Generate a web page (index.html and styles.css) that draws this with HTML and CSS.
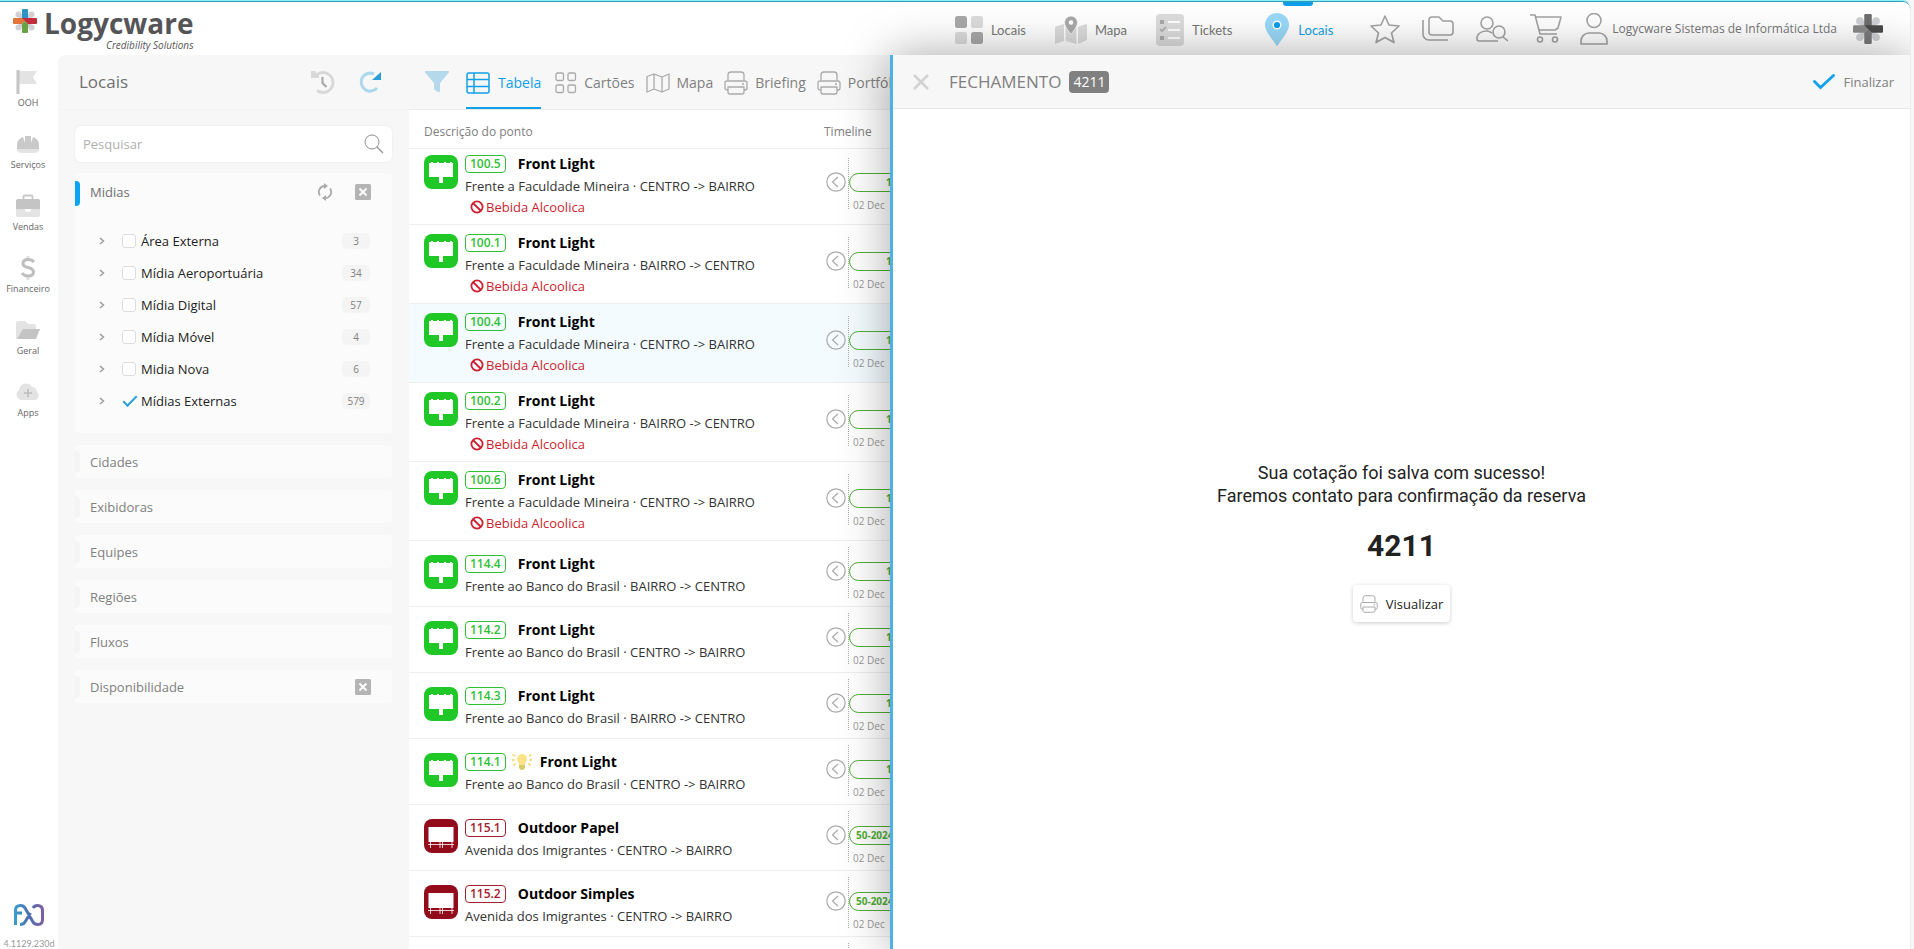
FILE: index.html
```html
<!DOCTYPE html>
<html lang="pt-BR">
<head>
<meta charset="utf-8">
<title>Logycware - Locais</title>
<link rel="stylesheet" href="styles.css">
</head>
<body>
<svg class="sprite" aria-hidden="true">
  <symbol id="asterisk" viewBox="0 0 24 24">
    <g class="ast-petal"><circle cx="5.500" cy="5.500" r="3"/><circle cx="18.500" cy="5.500" r="3"/><circle cx="5.500" cy="18.500" r="3"/><circle cx="18.500" cy="18.500" r="3"/><path d="M4 7 7 4l13 13-3 3zM17 4l3 3L7 20l-3-3z"/></g>
    <path class="ast-n" d="M10 0h4a1 1 0 0 1 1 1v8l-3 3-3-3V1a1 1 0 0 1 1-1z"/>
    <path class="ast-w" d="M1 9h8l3 3-3 3H1a1 1 0 0 1-1-1v-4a1 1 0 0 1 1-1z"/>
    <path class="ast-s" d="M9 15l3-3 3 3v8a1 1 0 0 1-1 1h-4a1 1 0 0 1-1-1z"/>
    <path class="ast-e" d="M9 9h14a1 1 0 0 1 1 1v4a1 1 0 0 1-1 1h-8z"/>
  </symbol>
  <symbol id="printer" viewBox="0 0 24 24"><g fill="none" stroke="currentColor" stroke-width="1.300" stroke-linejoin="round"><path d="M4 9V4a3 3 0 0 1 3-3h10a3 3 0 0 1 3 3v5"/><path d="M4 19H3a2 2 0 0 1-2-2v-5a2 2 0 0 1 2-2h18a2 2 0 0 1 2 2v5a2 2 0 0 1-2 2h-1M18 13h2"/><path d="M4 16h16v5a2 2 0 0 1-2 2H6a2 2 0 0 1-2-2z"/></g></symbol>
  <symbol id="billboard" viewBox="0 0 34 34"><rect width="34" height="34" rx="8" fill="#20c827"/><path fill="#fff" d="M5 8h2v-1h2v1h4v-1h2v1h5v-1h2v1h4v-1h2v1h1v14H19v6h-4v-6H5z"/></symbol>
  <symbol id="outdoor" viewBox="0 0 34 34"><rect width="34" height="34" rx="8" fill="#930c1c"/><path fill="#fff" d="M4.500 8h25v15h-25z"/><path fill="none" stroke="#fff" d="M4 25.500h26M6.500 23v6M16 23v6M18.500 23v6M28 23v6" stroke-width=".8"/></symbol>
  <symbol id="forbid" viewBox="0 0 14 14"><g fill="none" stroke="currentColor" stroke-width="1.800"><circle cx="7" cy="7" r="5.600"/><path d="m3 3 8 8"/></g></symbol>
  <symbol id="prev" viewBox="0 0 20 20"><g fill="none" stroke="currentColor" stroke-width="1.200"><circle cx="10" cy="10" r="9.200"/><path d="m12 5-5.500 5 5.500 5"/></g></symbol>
  <symbol id="chev" viewBox="0 0 6 8"><path d="m1 1 3.500 3L1 7" fill="none" stroke="currentColor" stroke-width="1.400"/></symbol>
  <symbol id="xbox" viewBox="0 0 16 16"><rect width="16" height="16" rx="1.500" fill="#b4b4b4"/><path d="m4.500 4.500 7 7m0-7-7 7" stroke="#fff" stroke-width="1.800"/></symbol>
</svg>

<div class="app">
  <header class="topbar">
    <a class="brand" href="#">
      <svg class="brand-mark"><use href="#asterisk"/></svg>
      <span class="brand-text"><strong>Logycware</strong><em>Credibility Solutions</em></span>
    </a>
    <nav class="topnav">
      <a href="#"><svg width="28" height="28" viewBox="0 0 28 28"><rect width="12" height="12" rx="2.500" fill="#a9a9a9"/><rect x="16" width="12" height="12" rx="2.500" fill="#dcdcdc"/><rect y="16" width="12" height="12" rx="2.500" fill="#dcdcdc"/><rect x="16" y="16" width="12" height="12" rx="2.500" fill="#a9a9a9"/></svg>Locais</a>
      <a href="#"><svg width="32" height="28" viewBox="0 0 32 28"><path fill="#dcdcdc" d="M0 12q0-1 1-1.500l8-2.500v17l-9 3zM10.500 8l11 3v17l-11-3zM23 11l8-3q1 0 1 1v14q0 1-1 1.500L23 28z"/><path d="M16 0a6.500 6.500 0 0 1 6.500 6.500C22.500 11 16 18 16 18S9.500 11 9.500 6.500A6.500 6.500 0 0 1 16 0z" fill="#a9a9a9" stroke="#fff" stroke-width=".7"/><circle cx="16" cy="6.500" r="2.300" fill="#fff"/></svg>Mapa</a>
      <a href="#"><svg width="28" height="32" viewBox="0 0 28 32"><rect width="28" height="32" rx="4" fill="#dcdcdc"/><path d="M12 8h12M12 16h12M12 24h12" stroke="#fff" stroke-width="2"/><path fill="#a9a9a9" d="M4 6h4v4H4zM4 22h4v4H4z"/><path d="m4 15 2 2 4-4" fill="none" stroke="#a9a9a9" stroke-width="1.600"/></svg>Tickets</a>
      <a class="active" href="#"><svg width="24" height="33" viewBox="0 0 24 33"><path fill="#99d9f8" d="M12 0a12 12 0 0 1 12 12c0 7-9 16-11 20q-1 2-2 0C9 28 0 19 0 12A12 12 0 0 1 12 0z"/><circle cx="12" cy="12" r="3.800" fill="#0aa0ea" stroke="#fff" stroke-width="1.400"/></svg>Locais</a>
    </nav>
    <div class="tools">
      <button aria-label="Favoritos"><svg width="30" height="30" viewBox="0 0 30 30"><path d="m15 2 4 9 10 1-7.500 7 2.500 9.500-9-5-9 5L8.500 19 1 12l10-1z"/></svg></button>
      <button aria-label="Pastas"><svg width="32" height="28" viewBox="0 0 32 28"><path d="M7 5a3 3 0 0 1 3-3h7l4 4h7a3 3 0 0 1 3 3v8a3 3 0 0 1-3 3H10a3 3 0 0 1-3-3zM1 5v14a6 6 0 0 0 6 6h19"/></svg></button>
      <button aria-label="Clientes"><svg width="32" height="28" viewBox="0 0 32 28"><circle cx="11" cy="8" r="6"/><path d="M16 18q-3-2-5-2-8 0-10 6v2q0 2 2 2h19M27 22l5 4"/><circle cx="23" cy="17" r="6"/></svg></button>
      <button aria-label="Carrinho"><svg width="32" height="30" viewBox="0 0 32 30"><path d="M0 1h5l5 19h17M5 3h26l-3 11-3 2H9"/><circle cx="10" cy="25.500" r="2.500"/><circle cx="25" cy="25.500" r="2.500"/></svg></button>
      <button class="user"><svg width="28" height="32" viewBox="0 0 28 32"><circle cx="14" cy="7.500" r="7"/><path d="M1 31v-3a8 8 0 0 1 8-8h10a8 8 0 0 1 8 8v3z"/></svg>Logycware Sistemas de Informática Ltda</button>
      <svg class="tenant"><use href="#asterisk"/></svg>
    </div>
  </header>

  <div class="body">
    <nav class="rail">
      <a href="#"><svg width="24" height="24" viewBox="0 0 24 24"><path fill="#e3e3e3" d="M3 1h18l-4 6 4 7H3z"/><path d="M2 0v24" stroke="#c4c4c4" stroke-width="3"/></svg>OOH</a>
      <a href="#"><svg width="24" height="24" viewBox="0 0 24 24"><path fill="#c9c9c9" d="M1 17v-3a9 9 0 0 1 6-9l2 6V4h6v7l2-6a9 9 0 0 1 6 9v3z"/><path fill="#e3e3e3" d="M1 17h22q0 4-5 4H6q-5 0-5-4z"/></svg>Serviços</a>
      <a href="#"><svg width="24" height="24" viewBox="0 0 24 24"><path d="M7.500 6V3q0-1.500 1.500-1.500h6q1.500 0 1.500 1.500v3" fill="none" stroke="#c9c9c9" stroke-width="2"/><rect y="5" width="24" height="18" rx="2.500" fill="#e3e3e3"/><path fill="#c4c4c4" d="M2 5h20q2 0 2 2v8H0V7q0-2 2-2z"/><path fill="#fff" d="M9 15h6v2q-3 2-6 0z"/></svg>Vendas</a>
      <a href="#"><svg width="24" height="24" viewBox="0 0 24 24"><path d="M12 0v4M12 20v4" stroke="#e0e0e0" stroke-width="3"/><path d="M18 6q-2-2.500-6-2.500-5 0-5 4 0 3 5 4t5.500 4.500q0 4-5.500 4-4 0-6-3" fill="none" stroke="#bfbfbf" stroke-width="3"/></svg>Financeiro</a>
      <a href="#"><svg width="24" height="24" viewBox="0 0 24 24"><path fill="#e3e3e3" d="M0 21V5q0-2 2-2h7l3 3h6q2 0 2 2v6z"/><path fill="#c4c4c4" d="M7 11h17l-4 10H1z"/></svg>Geral</a>
      <a href="#"><svg width="24" height="24" viewBox="0 0 24 24"><path fill="#e3e3e3" d="M6 20a5.500 5.500 0 0 1-3-10 7 7 0 0 1 13-3q4 0 5 5a4.500 4.500 0 0 1-2 8z"/><path d="M12 9v8M8 13h8" stroke="#bdbdbd" stroke-width="1.600"/></svg>Apps</a>
      <div class="rail-foot">
        <svg width="30" height="22" viewBox="0 0 30 22"><defs><linearGradient id="fx"><stop offset="0" stop-color="#3b9ccb"/><stop offset=".5" stop-color="#4d6fb0"/><stop offset="1" stop-color="#7b5fa3"/></linearGradient></defs><path d="M1.500 21V6q0-4.500 5-4.500 3 0 4.500 2.500l8 14q1.500 2.500 5 2.500 4.500 0 4.500-5V6.500q0-5-5-5-3 0-4.500 2.500M3 9h5M16.500 9l-5.500 9q-1.500 2.500-5 2.500" fill="none" stroke="url(#fx)" stroke-width="3"/></svg>
        <small>4.1129.230d</small>
      </div>
    </nav>

    <aside class="filters">
      <div class="filters-head">
        <h1>Locais</h1>
        <button aria-label="Histórico"><svg width="24" height="24" viewBox="0 0 24 24"><path d="M5.500 5A10 10 0 1 1 6 20.500" fill="none" stroke="#d8d8d8" stroke-width="3"/><path fill="#d8d8d8" d="M0 1h4l1 2 3 1v4H0z"/><path d="M11.500 7v6l4 4" fill="none" stroke="#a8a8a8" stroke-width="2.200"/></svg></button>
        <button aria-label="Atualizar"><svg width="24" height="24" viewBox="0 0 24 24"><path d="M15 4a9 9 0 1 0 3 14" fill="none" stroke="#a9d8ef" stroke-width="3"/><path fill="#249fd8" d="M22 2v8h-9z"/></svg></button>
      </div>
      <div class="search">
        <input type="text" aria-label="Pesquisar" placeholder="Pesquisar">
        <svg width="20" height="20" viewBox="0 0 20 20"><circle cx="8" cy="8" r="7" fill="none" stroke="#8f8f8f"/><path d="m13 13 6 6" stroke="#8f8f8f" stroke-width="1.200"/></svg>
      </div>
      <section class="card open">
        <div class="card-head">
          <h2>Midias</h2>
          <button aria-label="Recarregar"><svg width="16" height="18" viewBox="0 0 16 18"><path d="M8 3a6 6 0 0 0-5 9.500M8 15a6 6 0 0 0 5-9.500" fill="none" stroke="#aaa" stroke-width="1.800"/><path fill="#aaa" d="M7 0l4 3-4 3zM9 12v6l-4-3z"/></svg></button>
          <button aria-label="Limpar"><svg width="16" height="16"><use href="#xbox"/></svg></button>
        </div>
        <ul class="tree">
          <li><svg><use href="#chev"/></svg><label><input type="checkbox">Área Externa</label><span>3</span></li>
          <li><svg><use href="#chev"/></svg><label><input type="checkbox">Mídia Aeroportuária</label><span>34</span></li>
          <li><svg><use href="#chev"/></svg><label><input type="checkbox">Mídia Digital</label><span>57</span></li>
          <li><svg><use href="#chev"/></svg><label><input type="checkbox">Mídia Móvel</label><span>4</span></li>
          <li><svg><use href="#chev"/></svg><label><input type="checkbox">Midia Nova</label><span>6</span></li>
          <li><svg><use href="#chev"/></svg><label><input type="checkbox" checked>Mídias Externas</label><span>579</span></li>
        </ul>
      </section>
      <section class="card"><h2>Cidades</h2></section>
      <section class="card"><h2>Exibidoras</h2></section>
      <section class="card"><h2>Equipes</h2></section>
      <section class="card"><h2>Regiões</h2></section>
      <section class="card"><h2>Fluxos</h2></section>
      <section class="card"><h2>Disponibilidade</h2><button aria-label="Limpar disponibilidade"><svg width="16" height="16"><use href="#xbox"/></svg></button></section>
    </aside>

    <main class="content">
      <div class="tabs">
        <button class="funnel" aria-label="Filtrar"><svg width="24" height="22" viewBox="0 0 24 22"><path fill="#b3d9ea" d="M1 0h22q2 0 .5 2L15 12v8q0 2-2 1l-3-2q-1-.5-1-2v-5L.500 2Q-1 0 1 0z"/></svg></button>
        <button class="tab active"><svg width="24" height="22" viewBox="0 0 24 22"><path d="M3 1h18a2 2 0 0 1 2 2v16a2 2 0 0 1-2 2H3a2 2 0 0 1-2-2V3a2 2 0 0 1 2-2zM1 7.500h22M1 14.500h22M8 1v20" fill="none" stroke="currentColor" stroke-width="1.500"/></svg>Tabela</button>
        <button class="tab"><svg width="22" height="22" viewBox="0 0 22 22"><g fill="none" stroke="currentColor" stroke-width="1.300"><rect x="1" y="1" width="7.500" height="7.500" rx="1.500"/><rect x="13" y="1" width="7.500" height="7.500" rx="1.500"/><rect x="1" y="13" width="7.500" height="7.500" rx="1.500"/><rect x="13" y="13" width="7.500" height="7.500" rx="1.500"/></g></svg>Cartões</button>
        <button class="tab"><svg width="24" height="20" viewBox="0 0 24 20"><path d="M1 3.500 8 1l8 3 7-3v15l-7 3-8-3-7 3zM8 1v15M16 4v15" fill="none" stroke="currentColor" stroke-width="1.300" stroke-linejoin="round"/></svg>Mapa</button>
        <button class="tab"><svg width="24" height="24"><use href="#printer"/></svg>Briefing</button>
        <button class="tab"><svg width="24" height="24"><use href="#printer"/></svg>Portfólio</button>
      </div>
      <table class="points">
        <thead><tr><th class="col-desc">Descrição do ponto</th><th>Timeline</th></tr></thead>
        <tbody>
          <tr class="first"><td><div class="point"><svg><use href="#billboard"/></svg><div><p class="name"><span class="code">100.5</span><b>Front Light</b></p><p>Frente a Faculdade Mineira · CENTRO -&gt; BAIRRO</p><p class="ban"><svg><use href="#forbid"/></svg>Bebida Alcoolica</p></div></div></td><td><div class="time"><button aria-label="Anterior"><svg><use href="#prev"/></svg></button><div class="track"><span class="pill wide">12-2024</span><small>02 Dec</small></div></div></td></tr>
          <tr class="tall"><td><div class="point"><svg><use href="#billboard"/></svg><div><p class="name"><span class="code">100.1</span><b>Front Light</b></p><p>Frente a Faculdade Mineira · BAIRRO -&gt; CENTRO</p><p class="ban"><svg><use href="#forbid"/></svg>Bebida Alcoolica</p></div></div></td><td><div class="time"><button aria-label="Anterior"><svg><use href="#prev"/></svg></button><div class="track"><span class="pill wide">12-2024</span><small>02 Dec</small></div></div></td></tr>
          <tr class="tall hover"><td><div class="point"><svg><use href="#billboard"/></svg><div><p class="name"><span class="code">100.4</span><b>Front Light</b></p><p>Frente a Faculdade Mineira · CENTRO -&gt; BAIRRO</p><p class="ban"><svg><use href="#forbid"/></svg>Bebida Alcoolica</p></div></div></td><td><div class="time"><button aria-label="Anterior"><svg><use href="#prev"/></svg></button><div class="track"><span class="pill wide">12-2024</span><small>02 Dec</small></div></div></td></tr>
          <tr class="tall"><td><div class="point"><svg><use href="#billboard"/></svg><div><p class="name"><span class="code">100.2</span><b>Front Light</b></p><p>Frente a Faculdade Mineira · BAIRRO -&gt; CENTRO</p><p class="ban"><svg><use href="#forbid"/></svg>Bebida Alcoolica</p></div></div></td><td><div class="time"><button aria-label="Anterior"><svg><use href="#prev"/></svg></button><div class="track"><span class="pill wide">12-2024</span><small>02 Dec</small></div></div></td></tr>
          <tr class="tall"><td><div class="point"><svg><use href="#billboard"/></svg><div><p class="name"><span class="code">100.6</span><b>Front Light</b></p><p>Frente a Faculdade Mineira · CENTRO -&gt; BAIRRO</p><p class="ban"><svg><use href="#forbid"/></svg>Bebida Alcoolica</p></div></div></td><td><div class="time"><button aria-label="Anterior"><svg><use href="#prev"/></svg></button><div class="track"><span class="pill wide">12-2024</span><small>02 Dec</small></div></div></td></tr>
          <tr><td><div class="point"><svg><use href="#billboard"/></svg><div><p class="name"><span class="code">114.4</span><b>Front Light</b></p><p>Frente ao Banco do Brasil · BAIRRO -&gt; CENTRO</p></div></div></td><td><div class="time"><button aria-label="Anterior"><svg><use href="#prev"/></svg></button><div class="track"><span class="pill wide">12-2024</span><small>02 Dec</small></div></div></td></tr>
          <tr><td><div class="point"><svg><use href="#billboard"/></svg><div><p class="name"><span class="code">114.2</span><b>Front Light</b></p><p>Frente ao Banco do Brasil · CENTRO -&gt; BAIRRO</p></div></div></td><td><div class="time"><button aria-label="Anterior"><svg><use href="#prev"/></svg></button><div class="track"><span class="pill wide">12-2024</span><small>02 Dec</small></div></div></td></tr>
          <tr><td><div class="point"><svg><use href="#billboard"/></svg><div><p class="name"><span class="code">114.3</span><b>Front Light</b></p><p>Frente ao Banco do Brasil · BAIRRO -&gt; CENTRO</p></div></div></td><td><div class="time"><button aria-label="Anterior"><svg><use href="#prev"/></svg></button><div class="track"><span class="pill wide">12-2024</span><small>02 Dec</small></div></div></td></tr>
          <tr><td><div class="point"><svg><use href="#billboard"/></svg><div><p class="name"><span class="code">114.1</span><svg class="bulb" viewBox="0 0 20 18"><path fill="#fbe38a" d="M10 1a5 5 0 0 1 5 5c0 3-2 3.500-2 6H7C7 9.500 5 9 5 6a5 5 0 0 1 5-5z"/><path fill="#d8cc6a" d="M7 12h6v3l-2 2H9l-2-2z"/><path d="M3 3 .5 1.500M2.500 7H0M3.500 10.500l-2 2M17 3l2.500-1.500M17.500 7H20M16.500 10.500l2 2" stroke="#efd04a" stroke-width="1.400"/></svg><b>Front Light</b></p><p>Frente ao Banco do Brasil · CENTRO -&gt; BAIRRO</p></div></div></td><td><div class="time"><button aria-label="Anterior"><svg><use href="#prev"/></svg></button><div class="track"><span class="pill wide">12-2024</span><small>02 Dec</small></div></div></td></tr>
          <tr><td><div class="point red"><svg><use href="#outdoor"/></svg><div><p class="name"><span class="code">115.1</span><b>Outdoor Papel</b></p><p>Avenida dos Imigrantes · CENTRO -&gt; BAIRRO</p></div></div></td><td><div class="time"><button aria-label="Anterior"><svg><use href="#prev"/></svg></button><div class="track"><span class="pill">50-2024</span><small>02 Dec</small></div></div></td></tr>
          <tr><td><div class="point red"><svg><use href="#outdoor"/></svg><div><p class="name"><span class="code">115.2</span><b>Outdoor Simples</b></p><p>Avenida dos Imigrantes · CENTRO -&gt; BAIRRO</p></div></div></td><td><div class="time"><button aria-label="Anterior"><svg><use href="#prev"/></svg></button><div class="track"><span class="pill">50-2024</span><small>02 Dec</small></div></div></td></tr>
          <tr><td></td><td><div class="time"><div class="track lone"></div></div></td></tr>
        </tbody>
      </table>
    </main>

    <section class="drawer" role="dialog" aria-label="Fechamento">
      <div class="drawer-head">
        <button class="close" aria-label="Fechar"><svg width="16" height="16" viewBox="0 0 16 16"><path d="m1 1 14 14M15 1 1 15" stroke="#d2d2d2" stroke-width="2.600"/></svg></button>
        <h2>FECHAMENTO</h2><span class="quote">4211</span>
        <button class="finish"><svg width="22" height="16" viewBox="0 0 22 16"><path d="m1.500 7.500 6 6L20.500 1.500" fill="none" stroke="#10a0ee" stroke-width="2.800" stroke-linecap="round"/></svg>Finalizar</button>
      </div>
      <div class="drawer-body">
        <p>Sua cotação foi salva com sucesso!<br>Faremos contato para confirmação da reserva</p>
        <strong>4211</strong>
        <button class="view"><svg width="18" height="18"><use href="#printer"/></svg>Visualizar</button>
      </div>
    </section>
  </div>
</div>
</body>
</html>
```
FILE: styles.css
```css
* { box-sizing: border-box; }
body, h1, h2, p, ul { margin: 0; padding: 0; }
body {
  background: #f7f7f7;
  color: #222;
  font: 13px/20px "Open Sans", "Noto Sans", sans-serif;
}
button { border: 0; background: none; padding: 0; color: inherit; font: inherit; }
a { color: inherit; text-decoration: none; }
svg { display: block; flex: none; }
.sprite { position: absolute; width: 0; height: 0; }

.app {
  display: flex;
  flex-direction: column;
  height: 100vh;
  margin-right: 3px;
  padding-top: 1px;
  overflow: hidden;
  background: #fff;
  border-top: 1px solid #8eeef2;
  border-right: 1px solid #ececec;
  border-top-right-radius: 8px;
  box-shadow: inset 0 1px #2f9fc0;
}

/* top bar */
.topbar { display: flex; flex: none; height: 53px; padding-right: 27px; }
.brand { display: flex; align-items: flex-start; gap: 7px; padding: 5px 0 0 13px; }
.brand-mark { width: 24px; height: 24px; margin-top: 2px; }
.brand-text { display: flex; flex-direction: column; align-items: flex-end; color: #555558; }
.brand-text strong { font-size: 28px; line-height: 32px; }
.brand-text em { font-size: 10px; line-height: 12px; }
.ast-n { fill: var(--n, #6f6f6f); }
.ast-w { fill: var(--w, #8a8a8a); }
.ast-s { fill: var(--s, #7a7a7a); }
.ast-e { fill: var(--e, #4a4a4a); }
.ast-petal { fill: #cfd0d3; }
.brand-mark { --n: #2f93c8; --w: #e2763a; --s: #67a244; --e: #c42b3c; }
.topnav { display: flex; gap: 29px; margin-left: auto; font: 13px/18px Lato, sans-serif; color: #777; }
.topnav a { position: relative; display: flex; align-items: center; gap: 8px; padding-top: 2px; }
.topnav .active { gap: 9px; margin-left: 4px; color: #10a0ea; }
.topnav .active::before {
  content: "";
  position: absolute;
  top: 0;
  left: 18px;
  width: 30px;
  height: 4px;
  border-radius: 0 0 3px 3px;
  background: #10a0ea;
}
.tools { display: flex; align-items: center; gap: 22px; margin-left: 37px; color: #777; font-size: 12px; }
.tools button svg { fill: none; stroke: #a3a3a3; stroke-width: 1.600; stroke-linejoin: round; }
.tools .user { display: flex; align-items: center; gap: 4px; margin-left: -4px; }
.tenant { width: 30px; height: 30px; margin-left: -6px; }

.body { position: relative; display: flex; flex: 1; min-height: 0; }

/* icon rail */
.rail { display: flex; flex: none; flex-direction: column; width: 58px; padding-top: 15px; }
.rail a { display: flex; flex-direction: column; align-items: center; gap: 3px; height: 62px; padding-right: 2px; color: #666; font-size: 9px; line-height: 11px; }
.rail-foot { display: flex; flex-direction: column; align-items: center; gap: 13px; margin-top: auto; color: #999; }
.rail-foot small { font: 9px/10px Lato, sans-serif; }

/* filters */
.filters { flex: none; width: 351px; padding: 0 17px; background: #f7f7f7; border-top-left-radius: 8px; }
.filters-head { display: flex; align-items: center; gap: 24px; height: 55px; margin: 0 -17px 16px; padding: 0 26px 0 21px; border-bottom: 1px solid #f3f3f3; }
.filters-head h1 { flex: 1; color: #707070; font-size: 17px; font-weight: 400; }
.search { display: flex; align-items: center; height: 36px; padding: 0 8px 0 6px; border-radius: 6px; background: #fff; box-shadow: 0 0 2px #e4e4e4; }
.search input { flex: 1; min-width: 0; border: 0; outline: 0; background: none; font: inherit; }
.search input::placeholder { color: #b0b0b0; opacity: 1; }
.card { position: relative; display: flex; align-items: center; height: 33px; margin-top: 12px; padding: 0 21px 0 15px; border-radius: 4px; background: #fbfbfb; }
.card::before { content: ""; position: absolute; left: 0; top: 6px; width: 5px; height: 22px; border-radius: 0 4px 4px 0; background: #f4f4f4; }
.card h2 { flex: 1; color: #808080; font-size: 13px; font-weight: 400; }
.card.open { display: block; height: 260px; margin-top: 11px; }
.card.open::before { top: 8px; height: 25px; background: #0aa5f0; }
.card-head { display: flex; align-items: center; gap: 22px; height: 38px; }
.card-head h2 { color: #707070; }
.tree { margin-top: 14px; list-style: none; }
.tree li { display: flex; align-items: center; height: 32px; }
.tree li > svg { width: 6px; height: 8px; margin: 0 17px 0 9px; color: #999; }
.tree label { display: flex; flex: 1; align-items: center; gap: 5px; }
.tree input { appearance: none; width: 14px; height: 14px; margin: 0; border: 1px solid #ddd; border-radius: 3px; background: #fff; }
.tree input:checked { border-color: transparent; background: none; display: grid; place-items: center; }
.tree input:checked::before { content: ""; width: 12px; height: 5px; margin-top: -4px; border: solid #2a9fd8; border-width: 0 0 2px 2px; transform: rotate(-45deg); }
.tree li span { width: 28px; height: 16px; margin-right: 1px; border-radius: 5px; background: #f4f4f4; color: #808080; font-size: 10px; line-height: 16px; text-align: center; }

/* table */
.content { flex: 1; min-width: 0; overflow: hidden; }
.tabs { display: flex; height: 55px; padding-left: 16px; border-bottom: 1px solid #ececec; background: #f7f7f7; color: #808080; }
.tab { display: flex; align-items: center; gap: 7px; margin-right: 11px; padding-top: 2px; font-size: 14px; }
.tab svg { color: #aaa; }
.tab.active, .tab.active svg { color: #10a0ea; }
.tab.active { gap: 8px; margin-right: 14px; box-shadow: inset 0 -2px #10a0ea; }
.funnel { margin-right: 17px; }
.points { width: 100%; border-collapse: collapse; table-layout: fixed; }
.points th { height: 38px; padding: 7px 0 0 15px; border-bottom: 1px solid #eee; color: #808080; font-size: 12px; font-weight: 400; text-align: left; }
.points .col-desc { width: 400px; }
.points td { height: 66px; padding: 14px 0 0 15px; border-bottom: 1px solid #eee; vertical-align: top; }
.points td + td { padding-top: 6px; }
.points .tall td { height: 79px; padding-top: 9px; }
.points .tall td + td { padding-top: 12px; }
.points .first td { height: 76px; padding-top: 6px; }
.points .first td + td { padding-top: 9px; }
.hover { background: #f3fbff; }
.point { display: flex; gap: 7px; color: #333; --tone: #2fbf35; }
.point.red { --tone: #a3202f; }
.point > svg { width: 34px; height: 34px; }
.name { display: flex; align-items: center; height: 18px; margin-bottom: 3px; }
.name b { margin-left: 12px; color: #000; font-size: 14px; }
.code { height: 18px; padding: 0 4px; border: 1px solid var(--tone); border-radius: 4px; color: var(--tone); font-size: 12px; font-weight: 600; line-height: 16px; }
.bulb { width: 20px; height: 18px; margin: 0 -4px 0 6px; }
.ban { display: flex; align-items: center; gap: 2px; padding: 1px 0 0 5px; color: #cc1f2f; }
.ban svg { width: 14px; height: 14px; }
.time { display: flex; align-items: flex-start; gap: 2px; padding-left: 2px; }
.time button { margin-top: 14px; color: #aaa; }
.time button svg { width: 20px; height: 20px; }
.track { display: flex; flex-direction: column; align-items: flex-start; gap: 4px; height: 51px; padding-top: 15px; border-left: 1px dotted #aaa; }
.track small { margin-left: 4px; color: #999; font-size: 10px; line-height: 18px; }
.track.lone { margin-left: 22px; }
.pill { height: 19px; padding: 0 6px; border: 1px solid #50ad35; border-radius: 10px; color: #50ad35; font-size: 10px; font-weight: 700; line-height: 17px; }
.pill.wide { padding: 0 36px; }

/* closing drawer */
.drawer {
  position: absolute;
  top: 0;
  right: 0;
  bottom: 0;
  display: flex;
  flex-direction: column;
  width: 53.400%;
  border-left: 3px solid #4ab2e6;
  background: #fff;
  box-shadow: 0 0 45px rgba(0, 0, 0, .35);
}
.drawer-head { display: flex; flex: none; align-items: center; height: 54px; padding: 0 16px 0 20px; border-bottom: 1px solid #e6e6e6; background: #f7f7f7; color: #808080; }
.drawer-head h2 { margin: 0 8px 0 20px; font-size: 17px; font-weight: 400; }
.quote { padding: 0 4px; border-radius: 4px; background: #808080; color: #fff; font-size: 14px; line-height: 22px; }
.finish { display: flex; align-items: center; gap: 9px; margin-left: auto; padding-top: 1px; font-size: 13px; }
.drawer-body { display: flex; flex: 1; flex-direction: column; align-items: center; justify-content: center; padding-top: 25px; font-family: Roboto, sans-serif; text-align: center; }
.drawer-body p { font-size: 18px; line-height: 23px; }
.drawer-body strong { margin: 20px 0; font-size: 30px; line-height: 38px; }
.view { display: flex; align-items: center; gap: 8px; height: 37px; padding: 0 7px; border-radius: 4px; box-shadow: 0 1px 4px #ccc; font: 13px/20px "Open Sans", "Noto Sans", sans-serif; }
.view svg { color: #aaa; }
```
